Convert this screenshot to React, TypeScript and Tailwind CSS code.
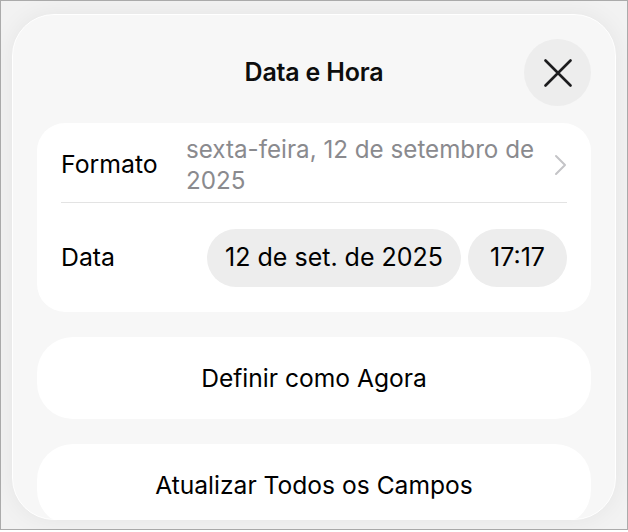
import React from 'react';

const font = { fontFamily: 'Inter, "Noto Sans", sans-serif' };

const CloseIcon = () => (
  <svg width="28" height="28" viewBox="0 0 28 28" fill="none">
    <path d="M1.5 1.5 L26.5 26.5 M26.5 1.5 L1.5 26.5" stroke="#1c1c1e" strokeWidth="2.6" strokeLinecap="round" />
  </svg>
);

const Chevron = () => (
  <svg width="13" height="22" viewBox="0 0 13 22" fill="none">
    <path d="M2 2 L11 11 L2 20" stroke="#c4c4c7" strokeWidth="2" strokeLinecap="round" strokeLinejoin="round" />
  </svg>
);

export default function App() {
  return (
    <div
      className="w-[628px] h-[530px] bg-[#f2f2f2] border border-[#ababab] pl-[11px] pt-[13px] pr-[11px]"
      style={font}
    >
      <div className="w-[604px] h-[506px] rounded-[42px] bg-[#f7f7f7] border border-white shadow-[0_0_24px_rgba(0,0,0,0.06)] overflow-hidden px-6 pt-6 flex flex-col">
        {/* Header */}
        <div className="relative h-[67px] flex items-center justify-center shrink-0">
          <h1 className="text-[25px] font-semibold text-[#0d0d0d] tracking-[-0.2px]">Data e Hora</h1>
          <button className="absolute right-0 top-0 w-[67px] h-[67px] rounded-full bg-[#ededed] flex items-center justify-center">
            <CloseIcon />
          </button>
        </div>

        {/* Settings card */}
        <div className="mt-[17px] bg-white rounded-[28px] px-6 shrink-0">
          <div className="flex items-center justify-between pt-[11px] pb-[6px] border-b border-[#e3e3e3]">
            <span className="text-[24.8px] text-black">Formato</span>
            <div className="flex items-center gap-[15px]">
              <span className="text-[24.2px] leading-[31px] text-[#8a8a8e] w-[353px]">
                sexta-feira, 12 de setembro de 2025
              </span>
              <Chevron />
            </div>
          </div>
          <div className="flex items-center justify-between pt-[26px] pb-[25px]">
            <span className="text-[24.8px] text-black">Data</span>
            <div className="flex items-center gap-[7px]">
              <span className="h-[58px] px-[18px] rounded-full bg-[#ededed] flex items-center text-[25px] text-black">
                12 de set. de 2025
              </span>
              <span className="h-[58px] w-[99px] rounded-full bg-[#ededed] flex items-center justify-center text-[25px] text-black">
                17:17
              </span>
            </div>
          </div>
        </div>

        {/* Actions */}
        <button className="mt-[25px] h-[82px] shrink-0 rounded-[36px] bg-white text-[24.6px] text-black">
          Definir como Agora
        </button>
        <button className="mt-[25px] h-[82px] shrink-0 rounded-[36px] bg-white text-[24.6px] text-black">
          Atualizar Todos os Campos
        </button>
      </div>
    </div>
  );
}
